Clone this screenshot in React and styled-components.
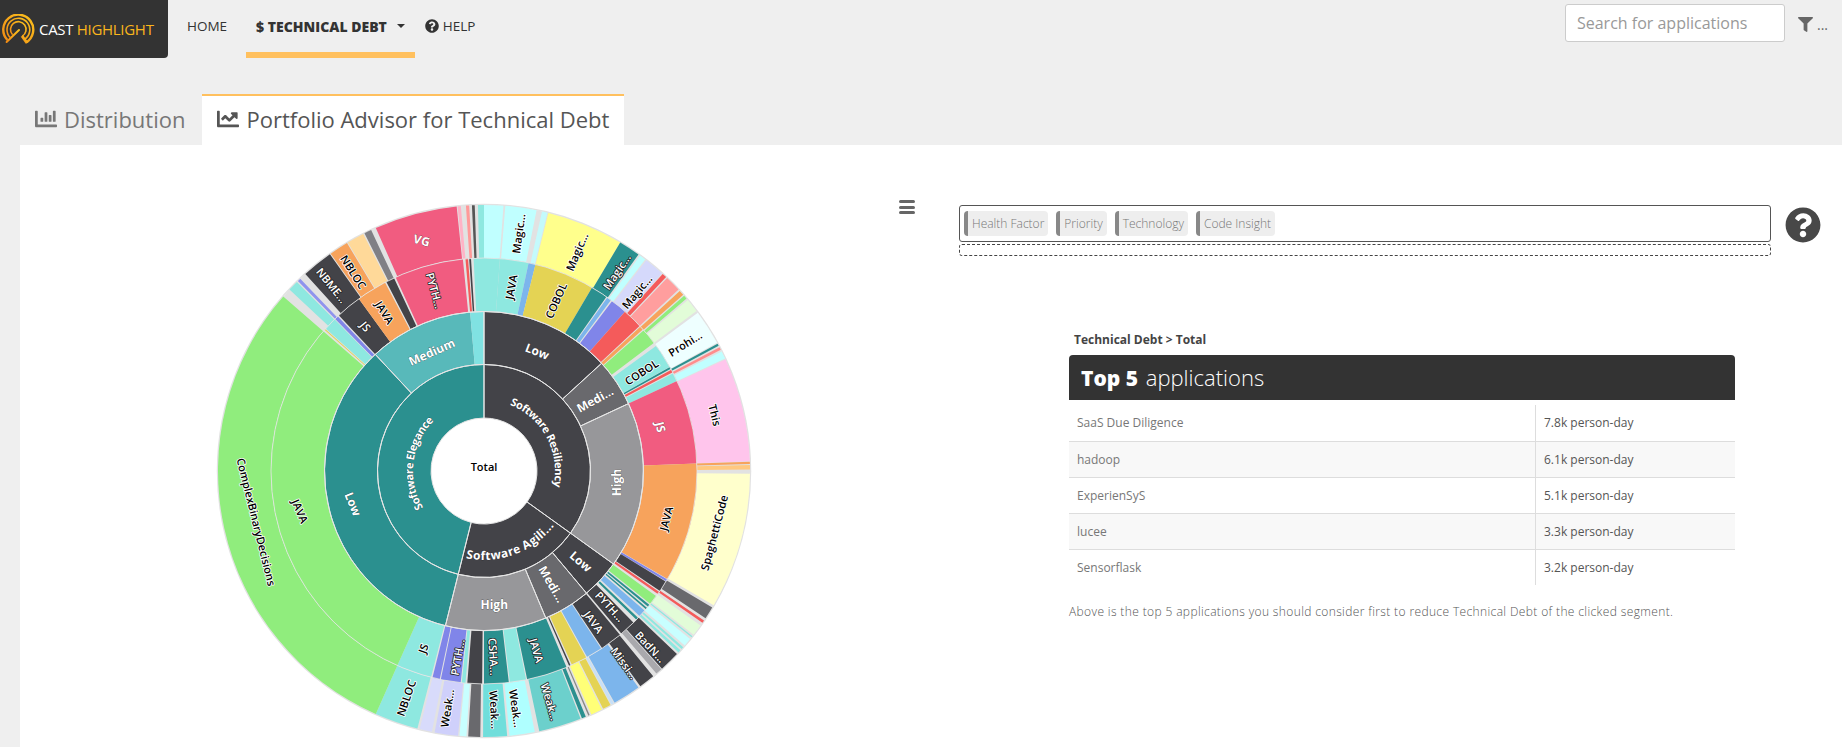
import React from "react";
import styled, { createGlobalStyle } from "styled-components";
import { FaChartBar, FaChartLine, FaFilter, FaQuestionCircle } from "react-icons/fa";

const GlobalStyle = createGlobalStyle`
  html, body {
    margin: 0;
    padding: 0;
    background: #efefef;
    font-family: "Open Sans", "Liberation Sans", sans-serif;
    overflow: hidden;
  }
`;

const Page = styled.div`
  width: 1842px;
  height: 747px;
  overflow: hidden;
  display: flex;
  flex-direction: column;
`;

const Header = styled.header`
  height: 58px;
  display: flex;
  align-items: stretch;
  flex-shrink: 0;
`;

const Brand = styled.div`
  width: 168px;
  background: #333333;
  border-bottom-right-radius: 4px;
  display: flex;
  align-items: center;
  gap: 3px;
  padding-left: 2px;
  box-sizing: border-box;
  font-size: 15px;
  color: #ffffff;
  white-space: nowrap;
  letter-spacing: -0.3px;

  span {
    color: #f9b51c;
  }
`;

const Nav = styled.nav`
  display: flex;
  align-items: stretch;
  margin-left: 10px;
`;

const NavItem = styled.a`
  display: flex;
  align-items: center;
  gap: 4px;
  box-sizing: border-box;
  margin-right: ${(p) => p.$gap || 0}px;
  padding: 0 ${(p) => p.$pad || 9}px;
  font-size: ${(p) => (p.$active ? 14 : 13.5)}px;
  font-weight: ${(p) => (p.$active ? 800 : 400)};
  color: #333333;
  border-bottom: 6px solid ${(p) => (p.$active ? "#ffc05e" : "transparent")};
  white-space: nowrap;
`;

const Caret = styled.i`
  width: 0;
  height: 0;
  margin-left: 6px;
  border-left: 4px solid transparent;
  border-right: 4px solid transparent;
  border-top: 4px solid #333333;
`;

const SearchArea = styled.div`
  margin-left: auto;
  display: flex;
  align-items: flex-start;
  padding-top: 4px;
  padding-right: 14px;
`;

const SearchInput = styled.input`
  width: 220px;
  height: 38px;
  box-sizing: border-box;
  border: 1px solid #cccccc;
  border-radius: 3px;
  background: #ffffff;
  padding: 0 11px;
  font-family: inherit;
  font-size: 16px;

  &::placeholder {
    color: #999999;
    opacity: 1;
  }
`;

const FilterBox = styled.div`
  display: flex;
  align-items: center;
  height: 40px;
  margin-left: 13px;
  color: #666666;
  font-size: 14px;
  gap: 4px;
`;

const Tabs = styled.div`
  display: flex;
  align-items: stretch;
  height: 51px;
  margin-top: 36px;
  margin-left: 20px;
  flex-shrink: 0;
`;

const Tab = styled.div`
  display: flex;
  align-items: center;
  gap: 7px;
  box-sizing: border-box;
  margin-right: ${(p) => p.$gap || 0}px;
  padding: 0 15px 4px;
  font-size: 22px;
  color: ${(p) => (p.$active ? "#555555" : "#777777")};
  background: ${(p) => (p.$active ? "#ffffff" : "transparent")};
  border-top: 2px solid ${(p) => (p.$active ? "#ffc05e" : "transparent")};
  white-space: nowrap;
`;

const Panel = styled.main`
  flex: 1;
  min-height: 0;
  margin-left: 20px;
  background: #ffffff;
  display: flex;
  overflow: hidden;
`;

const ChartColumn = styled.section`
  position: relative;
  width: 919px;
  flex-shrink: 0;
  padding: 46px 0 0 184px;
  box-sizing: border-box;
`;

const ChartMenu = styled.div`
  position: absolute;
  left: 879px;
  top: 55px;
  width: 16px;
  display: flex;
  flex-direction: column;
  gap: 2.5px;

  i {
    display: block;
    height: 3px;
    border-radius: 2px;
    background: #666666;
  }
`;

const RightColumn = styled.section`
  flex: 1;
  padding-top: 60px;
  padding-left: 20px;
`;

const PathRow = styled.div`
  display: flex;
  align-items: flex-start;
  gap: 14px;
`;

const PathBoxes = styled.div`
  width: 812px;
  display: flex;
  flex-direction: column;
  gap: 2px;
`;

const DimensionBox = styled.div`
  height: 37px;
  box-sizing: border-box;
  border: 1.5px solid #555555;
  border-radius: 3px;
  display: flex;
  align-items: center;
  gap: 8px;
  padding-left: 4px;
`;

const DropBox = styled.div`
  height: 12px;
  box-sizing: border-box;
  border: 1px dashed #444444;
  border-radius: 3px;
`;

const Chip = styled.span`
  height: 25px;
  display: flex;
  align-items: center;
  box-sizing: border-box;
  padding: 0 4px;
  background: #eeeeee;
  border-left: 4px solid #888888;
  border-radius: 4px;
  font-size: 12px;
  font-weight: 300;
  color: #777777;
  white-space: nowrap;
`;

const HelpBadge = styled.div`
  color: #484848;
  font-size: 36px;
  line-height: 0;
  margin-top: 2px;
`;

const TopApps = styled.div`
  width: 666px;
  margin-left: 110px;
  margin-top: 74px;
`;

const Crumb = styled.div`
  font-size: 12px;
  font-weight: 700;
  color: #444444;
  padding-left: 5px;
  height: 25px;
  line-height: 20px;
`;

const TopTitle = styled.h3`
  margin: 0;
  height: 45px;
  box-sizing: border-box;
  background: #333333;
  border-radius: 4px 4px 0 0;
  color: #ffffff;
  font-size: 22px;
  font-weight: 300;
  line-height: 45px;
  padding-left: 12px;

  b {
    font-size: 21px;
    font-weight: 800;
    margin-right: 2px;
  }
`;

const AppTable = styled.table`
  width: 100%;
  margin-top: 5px;
  border-collapse: collapse;
  font-size: 12px;
`;

const AppRow = styled.tr`
  height: 36px;
  background: ${(p) => (p.$odd ? "#f8f8f8" : "#ffffff")};
  border-bottom: 1px solid #dddddd;

  &:last-child {
    border-bottom: none;
  }
`;

const NameCell = styled.td`
  width: 458px;
  padding: 0 0 0 8px;
  color: #777777;
  border-right: 1px solid #dddddd;
`;

const ValueCell = styled.td`
  padding: 0 0 0 8px;
  color: #555555;
`;

const Note = styled.p`
  margin: 18px 0 0;
  font-size: 12px;
  font-weight: 300;
  letter-spacing: 0.37px;
  color: #555555;
  white-space: nowrap;
`;

const Label = styled.text`
  font-family: "Open Sans", "Liberation Sans", sans-serif;
  font-size: ${(p) => p.$size || 11}px;
  font-weight: ${(p) => p.$weight || 600};
  fill: ${(p) => (p.$light ? "#ffffff" : "#000000")};
  stroke: ${(p) => (p.$light ? "#222222" : "#ffffff")};
  stroke-width: ${(p) => p.$outline ?? 1.6}px;
  paint-order: stroke;
  stroke-linejoin: round;
  text-anchor: middle;
  dominant-baseline: central;
`;

const TEAL = "#2b908f";
const DARK = "#434348";
const AQUA = "#8ee8e0";
const CX = 280;
const CY = 280;
const RADII = [53, 106.5, 159.5, 213, 266];

const polar = (deg, r) => {
  const a = (deg * Math.PI) / 180;
  return [CX + r * Math.sin(a), CY - r * Math.cos(a)];
};

const wedge = (a, b, r0, r1) => {
  const [x0, y0] = polar(a, r1);
  const [x1, y1] = polar(b, r1);
  const [x2, y2] = polar(b, r0);
  const [x3, y3] = polar(a, r0);
  const big = b - a > 180 ? 1 : 0;
  return `M${x0} ${y0}A${r1} ${r1} 0 ${big} 1 ${x1} ${y1}L${x2} ${y2}A${r0} ${r0} 0 ${big} 0 ${x3} ${y3}Z`;
};

const arcPath = (a, b, r) => {
  const [x0, y0] = polar(a, r);
  const [x1, y1] = polar(b, r);
  return `M${x0} ${y0}A${r} ${r} 0 ${Math.abs(b - a) > 180 ? 1 : 0} ${b > a ? 1 : 0} ${x1} ${y1}`;
};

const ring1 = [
  [0, 125.7, DARK],
  [125.7, 194, DARK],
  [194, 360, TEAL],
];

const ring2 = [
  [0, 47.5, DARK],
  [47.5, 65, "#69696d"],
  [65, 125.7, "#97979a"],
  [125.7, 140, DARK],
  [140, 157.2, "#69696d"],
  [157.2, 194, "#97979a"],
  [194, 317, TEAL],
  [317, 355, "#58b9ba"],
  [355, 360, "#80e2e2"],
];

const ring3 = [
  [0, 4.3, AQUA],
  [4.3, 12.1, AQUA],
  [12.1, 14, "#7cb5ec"],
  [14, 30.5, "#e4d354"],
  [30.5, 35.1, TEAL],
  [35.4, 36.6, "#7cb5ec"],
  [37, 41.5, "#8085e9"],
  [41.5, 47, "#f45b5b"],
  [47.3, 48.3, "#f7a35c"],
  [48.6, 53, "#90ed7d"],
  [54, 60.7, AQUA],
  [60.8, 61.3, TEAL],
  [61.6, 62.4, "#f45b5b"],
  [62.7, 65, AQUA],
  [65, 88, "#f15c80"],
  [88, 120.5, "#f7a35c"],
  [120.6, 121.2, "#8085e9"],
  [121.3, 124.3, DARK],
  [124.6, 125.3, "#f45b5b"],
  [126, 128.6, "#90ed7d"],
  [129, 129.6, TEAL],
  [130, 130.5, TEAL],
  [131, 133, "#7cb5ec"],
  [133.6, 134.3, TEAL],
  [135.4, 139.8, DARK],
  [140.3, 146.3, DARK],
  [146.6, 151, "#7cb5ec"],
  [151.3, 155.6, "#e4d354"],
  [156, 156.4, DARK],
  [157.2, 168.3, TEAL],
  [168.6, 173, AQUA],
  [173.3, 180, TEAL],
  [180.5, 184.5, DARK],
  [185, 186, AQUA],
  [186.3, 191.7, "#8085e9"],
  [192, 194, "#8085e9"],
  [194.4, 204, AQUA],
  [204, 311, "#90ed7d"],
  [311.5, 311.8, "#e4d354"],
  [312, 315.4, AQUA],
  [315.6, 316.6, "#8085e9"],
  [317, 324, DARK],
  [324, 332.3, "#f7a35c"],
  [332.7, 335, DARK],
  [335.5, 354.3, "#f15c80"],
  [355, 355.7, "#f45b5b"],
  [356, 356.5, DARK],
  [357.2, 360, AQUA],
];

const ring4 = [
  [0, 4.2, "#c0ffff"],
  [4.6, 11.4, "#c0ffff"],
  [12.6, 13.8, "#c4fafc"],
  [14, 30.8, "#ffff8c"],
  [30.8, 35.5, TEAL],
  [35.9, 37.3, "#c0ffff"],
  [37.6, 42, "#d5d9fb"],
  [42.2, 43.2, "#f45b5b"],
  [43.5, 47, "#ff9e9e"],
  [47.4, 48.5, "#f7a35c"],
  [48.8, 49.6, "#90ed7d"],
  [50, 53, "#e2fcd8"],
  [53.5, 61.2, "#eeffff"],
  [61.4, 61.9, TEAL],
  [62.3, 62.9, "#ff8d8d"],
  [63.3, 65, "#c0ffff"],
  [65.2, 87.9, "#ffc5ec"],
  [88, 88.5, "#f7a35c"],
  [88.7, 89.7, "#ffc880"],
  [90.6, 120.3, "#ffffcc"],
  [120.9, 123.6, "#69696d"],
  [124.2, 124.8, "#f45b5b"],
  [125.5, 128, "#e2fcd8"],
  [128.4, 128.7, AQUA],
  [129.2, 131, "#c8ffff"],
  [131.5, 132, AQUA],
  [132.4, 133, AQUA],
  [133.5, 138, DARK],
  [138.2, 139.6, "#a9a9ad"],
  [140.5, 144, DARK],
  [144.5, 150.6, "#7cb5ec"],
  [150.8, 151.4, "#c7e0f7"],
  [151.6, 153.4, "#e4d354"],
  [153.7, 156.2, "#ffff77"],
  [156.6, 156.9, "#888888"],
  [157.5, 158.4, TEAL],
  [158.7, 168, "#6cd0cc"],
  [169, 174.5, "#afffff"],
  [175, 180.2, "#70dedb"],
  [180.8, 183.4, "#69696d"],
  [183.8, 185.3, "#c8ffff"],
  [185.6, 190.7, "#cfd0fb"],
  [191.3, 194, "#d8dbfb"],
  [194.5, 204, AQUA],
  [204, 311, "#90ed7d"],
  [313, 315.3, AQUA],
  [315.6, 316.3, "#8f93ee"],
  [317.8, 324.6, DARK],
  [324.8, 329, "#f7a35c"],
  [329.2, 333, "#ffd999"],
  [333.3, 334.9, "#808085"],
  [336, 354.1, "#f15c80"],
  [354.3, 355, "#ffb3c6"],
  [356.1, 356.8, "#ff9999"],
  [357.4, 358, "#555555"],
  [358.7, 360, AQUA],
];

const curved = [
  { text: "Software Resiliency", a: 8, b: 116, r: 76, size: 11 },
  { text: "Software Agili...", a: 205, b: 115, r: 84, size: 12 },
  { text: "Software Elegance", a: 204, b: 350, r: 76, size: 11 },
];

// white labels on the two inner rings, no visible outline there
const innerLabels = [
  ["Low", 24, 131, 21],
  ["Medi...", 57.2, 132, -29],
  ["High", 95, 133, -90],
  ["Low", 133, 132.5, 41],
  ["Medi...", 149, 132, 60],
  ["High", 175.6, 134, 0],
  ["Low", 255.8, 135, 68],
  ["Medium", 336.3, 130, -24],
  ["JS", 76, 182, 76],
  ["VG", 344.9, 239, 15],
];

// [text, angle, radius, rotation, light]
const labels = [
  ["JAVA", 8.3, 186, -80],
  ["COBOL", 22.8, 185, -66],
  ["COBOL", 57.8, 186, -33],
  ["JAVA", 104.6, 188, -75],
  ["PYTH...", 137, 185, 47, true],
  ["JAVA", 143.9, 186.6, 54, true],
  ["JAVA", 163.6, 187, 73.6, true],
  ["CSHA...", 177, 186, 87, true],
  ["PYTH...", 188.2, 188, -80, true],
  ["JS", 199, 187.7, -71],
  ["JAVA", 257.7, 188, 67],
  ["JS", 320.8, 187, 50, true],
  ["JAVA", 328, 187, 58],
  ["PYTH...", 344.8, 187, 75, true],
  ["Magic...", 8.2, 240, -82],
  ["Magic...", 22.9, 238, -67],
  ["Magic...", 33.6, 239.5, -56, true],
  ["Magic...", 40.4, 235.6, -50],
  ["Prohi...", 57.6, 238, -32],
  ["This", 76.4, 238, 76],
  ["SpaghettiCode", 105, 238, -75],
  ["BadN...", 136.5, 242, 47, true],
  ["Missi...", 143.8, 238, 54, true],
  ["Weak...", 164, 240, 74, true],
  ["Weak...", 172.3, 239.5, 82],
  ["Weak...", 177.4, 239, 87],
  ["Weak...", 188.9, 240, -81],
  ["NBLOC", 199, 240, -71],
  ["ComplexBinaryDecisions", 257.4, 233, 76],
  ["NBME...", 320.7, 240, 51, true],
  ["NBLOC", 326.8, 238, 57],
];

const apps = [
  ["SaaS Due Diligence", "7.8k person-day"],
  ["hadoop", "6.1k person-day"],
  ["ExperienSyS", "5.1k person-day"],
  ["lucee", "3.3k person-day"],
  ["Sensorflask", "3.2k person-day"],
];

const Ring = ({ cells, r0, r1 }) => (
  <g>
    <path d={wedge(0, 180, r0, r1)} fill="#e2e2e2" />
    <path d={wedge(180, 360, r0, r1)} fill="#e2e2e2" />
    {cells.map(([a, b, fill], i) => (
      <path key={i} d={wedge(a, b, r0, r1)} fill={fill} />
    ))}
  </g>
);

const Logo = () => (
  <svg width="34" height="30" viewBox="0 0 34 30">
    <defs>
      <linearGradient id="logo-gold" x1="0" y1="1" x2="1" y2="0">
        <stop offset="0" stopColor="#f08a14" />
        <stop offset="1" stopColor="#fbc21e" />
      </linearGradient>
    </defs>
    <g fill="none" stroke="url(#logo-gold)">
      <path d="M5.4 26 A15 15 0 1 1 24 28.5" strokeWidth="2.4" />
      <path d="M8 23.4 A11.4 11.4 0 1 1 22.3 25.4" strokeWidth="1.6" />
      <path d="M10.6 20.8 A7.8 7.8 0 1 1 20.2 22.2" strokeWidth="1.6" />
      <path d="M20 22 L25 29" strokeWidth="3" />
      <path d="M4.6 28 L17 16" strokeWidth="2" strokeLinecap="round" />
    </g>
  </svg>
);

const Sunburst = () => (
  <svg width="560" height="560" viewBox="0 0 560 560">
    <circle cx={CX} cy={CY} r={266.5} fill="none" stroke="#e2e2e2" strokeWidth="1.5" />
    <Ring cells={ring4} r0={RADII[3]} r1={RADII[4]} />
    <Ring cells={ring3} r0={RADII[2]} r1={RADII[3]} />
    <Ring cells={ring2} r0={RADII[1]} r1={RADII[2]} />
    <Ring cells={ring1} r0={RADII[0]} r1={RADII[1]} />
    <g fill="none" stroke="#e6e6e6" strokeWidth="1">
      {ring1.map(([a, b], i) => (
        <path key={i} d={wedge(a, b, RADII[0], RADII[1])} />
      ))}
      {ring2.slice(0, 7).map(([a, b], i) => (
        <path key={i} d={wedge(a, b, RADII[1], RADII[2])} />
      ))}
      <path d={wedge(317, 360, RADII[1], RADII[2])} />
      <circle cx={CX} cy={CY} r={RADII[2]} />
      <circle cx={CX} cy={CY} r={RADII[3]} strokeWidth="0.8" />
    </g>
    <defs>
      {curved.map(({ a, b, r }, i) => (
        <path key={i} id={`curve-${i}`} d={arcPath(a, b, r)} />
      ))}
    </defs>
    {curved.map(({ text, size }, i) => (
      <Label key={i} $light $size={size} $weight={700} $outline={0.4}>
        <textPath href={`#curve-${i}`} startOffset="50%">
          {text}
        </textPath>
      </Label>
    ))}
    {innerLabels.map(([text, angle, r, rot], i) => {
      const [x, y] = polar(angle, r);
      return (
        <Label key={i} x={x} y={y} transform={`rotate(${rot} ${x} ${y})`} $light $size={12} $weight={700} $outline={0.4}>
          {text}
        </Label>
      );
    })}
    {labels.map(([text, angle, r, rot, light], i) => {
      const [x, y] = polar(angle, r);
      return (
        <Label key={i} x={x} y={y} transform={`rotate(${rot} ${x} ${y})`} $light={light}>
          {text}
        </Label>
      );
    })}
    <Label x={CX} y={CY - 5} $outline={0}>
      Total
    </Label>
  </svg>
);

const App = () => (
  <Page>
    <GlobalStyle />
    <Header>
      <Brand>
        <Logo />
        <div>
          CAST <span>HIGHLIGHT</span>
        </div>
      </Brand>
      <Nav>
        <NavItem $gap={10}>HOME</NavItem>
        <NavItem $active $pad={10}>
          $ TECHNICAL DEBT
          <Caret />
        </NavItem>
        <NavItem $pad={10}>
          <FaQuestionCircle size={14} />
          HELP
        </NavItem>
      </Nav>
      <SearchArea>
        <SearchInput placeholder="Search for applications" readOnly />
        <FilterBox>
          <FaFilter size={15} />
          <span>...</span>
        </FilterBox>
      </SearchArea>
    </Header>
    <Tabs>
      <Tab $gap={2}>
        <FaChartBar size={22} />
        Distribution
      </Tab>
      <Tab $active>
        <FaChartLine size={22} />
        Portfolio Advisor for Technical Debt
      </Tab>
    </Tabs>
    <Panel>
      <ChartColumn>
        <Sunburst />
        <ChartMenu>
          <i />
          <i />
          <i />
        </ChartMenu>
      </ChartColumn>
      <RightColumn>
        <PathRow>
          <PathBoxes>
            <DimensionBox>
              <Chip>Health Factor</Chip>
              <Chip>Priority</Chip>
              <Chip>Technology</Chip>
              <Chip>Code Insight</Chip>
            </DimensionBox>
            <DropBox />
          </PathBoxes>
          <HelpBadge>
            <FaQuestionCircle />
          </HelpBadge>
        </PathRow>
        <TopApps>
          <Crumb>Technical Debt &gt; Total</Crumb>
          <TopTitle>
            <b>Top 5</b> applications
          </TopTitle>
          <AppTable>
            <tbody>
              {apps.map(([name, value], i) => (
                <AppRow key={name} $odd={i % 2 === 1}>
                  <NameCell>{name}</NameCell>
                  <ValueCell>{value}</ValueCell>
                </AppRow>
              ))}
            </tbody>
          </AppTable>
          <Note>
            Above is the top 5 applications you should consider first to reduce Technical Debt of the clicked segment.
          </Note>
        </TopApps>
      </RightColumn>
    </Panel>
  </Page>
);

export default App;
